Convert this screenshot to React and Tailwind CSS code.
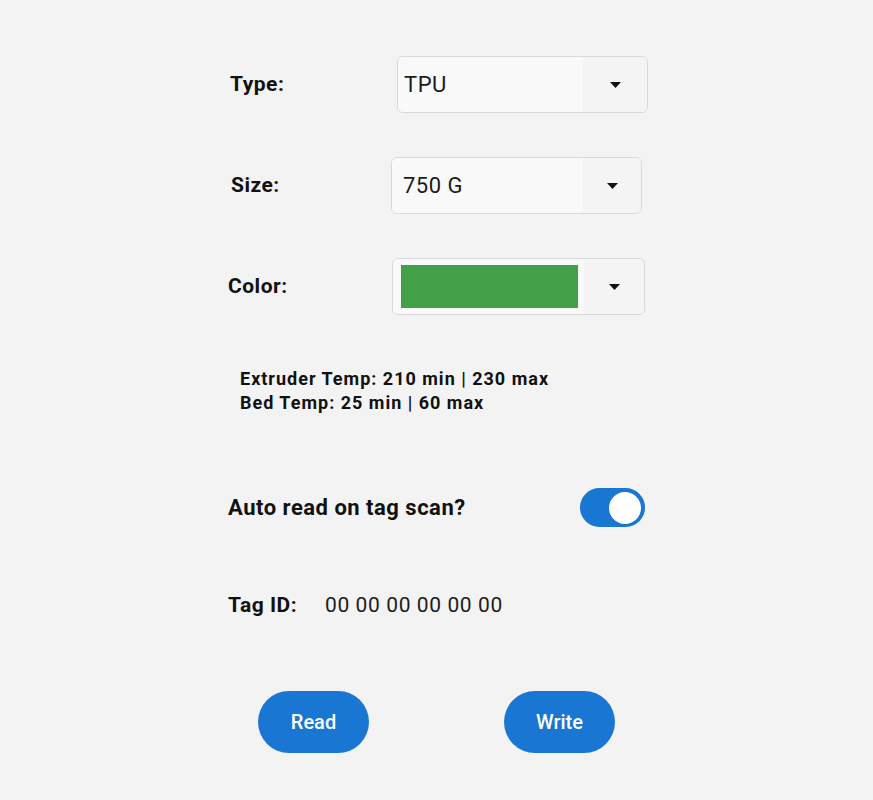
import React, { useState } from 'react';

function Caret() {
  return (
    <svg width="11" height="6" viewBox="0 0 11 6" className="block">
      <path d="M0 0 L11 0 L5.5 6 Z" fill="#111" />
    </svg>
  );
}

function Dropdown({ children, className = '', pad = 'pl-[7px]', arrow = 'w-[64px]' }) {
  return (
    <div className={`flex h-[57px] overflow-hidden rounded-md border border-[#d9d9d9] ${className}`}>
      <div className={`flex flex-1 items-center bg-[#f9f9f9] ${pad}`}>{children}</div>
      <div className={`flex items-center justify-center bg-[#f4f4f4] ${arrow}`}>
        <Caret />
      </div>
    </div>
  );
}

export default function App() {
  const [auto, setAuto] = useState(true);

  return (
    <div className="min-h-[800px] bg-[#f3f3f3] font-['Roboto',sans-serif] text-[#111]">
      <div className="ml-[228px] w-[420px] pt-[56px]">
        <div className="flex items-center">
          <span className="w-[169px] pl-[2px] text-[21px] font-bold tracking-[0.5px]">Type:</span>
          <Dropdown className="w-[251px]" pad="pl-[6px]">
            <span className="text-[22px] tracking-[0.5px] text-[#1c1c1c]">TPU</span>
          </Dropdown>
        </div>

        <div className="mt-[44px] flex items-center">
          <span className="w-[163px] pl-[3px] text-[21px] font-bold tracking-[0.5px]">Size:</span>
          <Dropdown className="w-[251px]" pad="pl-[11px]" arrow="w-[58px]">
            <span className="text-[22px] tracking-[0.5px] text-[#1c1c1c]">750 G</span>
          </Dropdown>
        </div>

        <div className="mt-[44px] flex items-center">
          <span className="w-[164px] text-[21px] font-bold tracking-[0.5px]">Color:</span>
          <Dropdown className="w-[253px]" pad="pl-[8px]" arrow="w-[60px]">
            <div className="h-[43px] w-[177px] bg-[#43a047]" />
          </Dropdown>
        </div>

        <div className="mt-[52px] pl-[12px] text-[18px] font-bold leading-[24px] tracking-[1px]">
          <p>Extruder Temp: 210 min | 230 max</p>
          <p>Bed Temp: 25 min | 60 max</p>
        </div>

        <div className="mt-[73px] flex items-center justify-between pr-[3px]">
          <span className="text-[22px] font-bold tracking-[0.5px]">Auto read on tag scan?</span>
          <button
            onClick={() => setAuto(!auto)}
            className={`flex h-[39px] w-[65px] items-center rounded-full px-[4px] ${
              auto ? 'justify-end bg-[#1976d2]' : 'justify-start bg-[#bdbdbd]'
            }`}
          >
            <span className="h-[32px] w-[32px] rounded-full bg-white" />
          </button>
        </div>

        <div className="mt-[63px] flex items-center text-[21px]">
          <span className="w-[97px] font-bold tracking-[0.5px]">Tag ID:</span>
          <span className="tracking-[0.6px] text-[#1c1c1c]">00 00 00 00 00 00</span>
        </div>

        <div className="mt-[69px] flex pl-[30px]">
          <button className="h-[62px] w-[111px] rounded-full bg-[#1976d2] text-[20px] font-medium text-white">
            Read
          </button>
          <button className="ml-[135px] h-[62px] w-[111px] rounded-full bg-[#1976d2] text-[20px] font-medium text-white">
            Write
          </button>
        </div>
      </div>
    </div>
  );
}
